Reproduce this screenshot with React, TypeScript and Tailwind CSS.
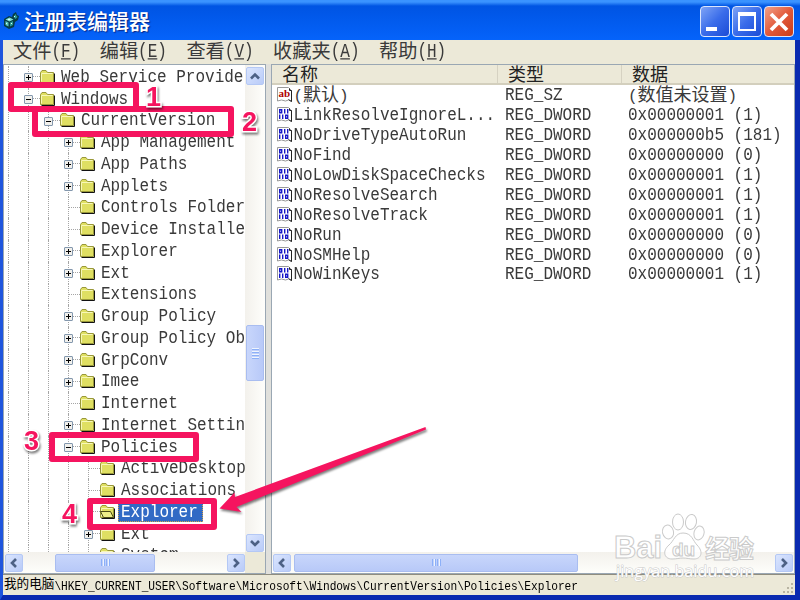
import clsx from 'clsx'

type TreeNode = {
  name: string
  level: number
  state?: 'open' | 'closed'
  selected?: boolean
}

type RegistryValue = {
  name: string
  type: string
  data: string
}

const menus = [
  { label: '文件', hotkey: 'F' },
  { label: '编辑', hotkey: 'E' },
  { label: '查看', hotkey: 'V' },
  { label: '收藏夹', hotkey: 'A' },
  { label: '帮助', hotkey: 'H' },
]

const nodes: TreeNode[] = [
  { name: 'Web Service Providers', level: 1, state: 'closed' },
  { name: 'Windows', level: 1, state: 'open' },
  { name: 'CurrentVersion', level: 2, state: 'open' },
  { name: 'App Management', level: 3, state: 'closed' },
  { name: 'App Paths', level: 3, state: 'closed' },
  { name: 'Applets', level: 3, state: 'closed' },
  { name: 'Controls Folder', level: 3 },
  { name: 'Device Installer', level: 3 },
  { name: 'Explorer', level: 3, state: 'closed' },
  { name: 'Ext', level: 3, state: 'closed' },
  { name: 'Extensions', level: 3 },
  { name: 'Group Policy', level: 3, state: 'closed' },
  { name: 'Group Policy Objects', level: 3, state: 'closed' },
  { name: 'GrpConv', level: 3, state: 'closed' },
  { name: 'Imee', level: 3, state: 'closed' },
  { name: 'Internet', level: 3 },
  { name: 'Internet Settings', level: 3, state: 'closed' },
  { name: 'Policies', level: 3, state: 'open' },
  { name: 'ActiveDesktop', level: 4 },
  { name: 'Associations', level: 4 },
  { name: 'Explorer', level: 4, selected: true },
  { name: 'Ext', level: 4, state: 'closed' },
  { name: 'System', level: 4 },
]

const values: RegistryValue[] = [
  { name: '(默认)', type: 'REG_SZ', data: '(数值未设置)' },
  { name: 'LinkResolveIgnoreL...', type: 'REG_DWORD', data: '0x00000001 (1)' },
  { name: 'NoDriveTypeAutoRun', type: 'REG_DWORD', data: '0x000000b5 (181)' },
  { name: 'NoFind', type: 'REG_DWORD', data: '0x00000000 (0)' },
  { name: 'NoLowDiskSpaceChecks', type: 'REG_DWORD', data: '0x00000001 (1)' },
  { name: 'NoResolveSearch', type: 'REG_DWORD', data: '0x00000001 (1)' },
  { name: 'NoResolveTrack', type: 'REG_DWORD', data: '0x00000001 (1)' },
  { name: 'NoRun', type: 'REG_DWORD', data: '0x00000000 (0)' },
  { name: 'NoSMHelp', type: 'REG_DWORD', data: '0x00000000 (0)' },
  { name: 'NoWinKeys', type: 'REG_DWORD', data: '0x00000001 (1)' },
]

function AppIcon() {
  return (
    <svg width="16" height="18" viewBox="0 0 16 18">
      <path d="M0 8l5-3 3 1 1-3 3-2 1 3 2 1-1 4-3 2-1 5-5 2-5-3z" fill="#063c46" />
      <path d="M1.5 8.5l4-2 4 2-4 2z" fill="#7fe0d8" />
      <path d="M1.5 10l3 1.5v4l-3-1.5z" fill="#5cc9bd" />
      <path d="M6 11.5l3-1.5v4l-3 1.5z" fill="#2a9a94" />
      <path d="M9.5 6l2-3 1 2 1 1-2 2z" fill="#2f9c94" />
      <path d="M4 8h2v1H4zM2 12h1v1H2zM7 12h1v1H7zM10 5h1v1h-1z" fill="#d8fffa" />
    </svg>
  )
}

function TitleBar() {
  const button =
    'flex h-[31px] w-[30px] items-center justify-center rounded-[4px] border border-[#dbe6fd]'

  return (
    <div className="flex h-10 shrink-0 items-center bg-linear-to-b from-[#3a93ff] from-5% via-[#0054e3] via-15% to-[#0563fb] pr-[6px] pl-1">
      <AppIcon />
      <h1 className="ml-[4px] flex-1 font-['Noto_Sans_CJK_SC',sans-serif] text-[21px] leading-10 font-medium text-white [text-shadow:1px_1px_1px_#0a2a8a]">
        注册表编辑器
      </h1>
      <div className="flex gap-[2px] pt-[3px]">
        <div className={clsx(button, 'bg-linear-to-br from-[#7fa3f5] via-[#3a6cea] to-[#1c4bd6]')}>
          <div className="mt-[15px] mr-[7px] h-[4px] w-[11px] bg-white" />
        </div>
        <div className={clsx(button, 'bg-linear-to-br from-[#7fa3f5] via-[#3a6cea] to-[#1c4bd6]')}>
          <div className="h-[19px] w-[18px] border-2 border-t-4 border-white" />
        </div>
        <div className={clsx(button, 'bg-linear-to-br from-[#f0a088] via-[#e2593a] to-[#c93c17]')}>
          <svg width="20" height="20" viewBox="0 0 20 20">
            <path d="M2 2l16 16M18 2L2 18" stroke="#fff" strokeWidth="3.8" />
          </svg>
        </div>
      </div>
    </div>
  )
}

function MenuBar() {
  return (
    <div className="flex h-[24px] shrink-0 gap-[19.5px] bg-[#ece9d8] pl-[10px] text-[19.2px] leading-[26px] text-[#3a3a3a]">
      {menus.map((menu) => (
        <span key={menu.hotkey} className="flex whitespace-nowrap">
          {menu.label}
          <span className="scale-y-125 text-[16px] leading-[24px]">
            (<u className="decoration-1 underline-offset-1">{menu.hotkey}</u>)
          </span>
        </span>
      ))}
    </div>
  )
}

function Folder({ open }: { open?: boolean }) {
  return (
    <svg width="16" height="14" viewBox="0 0 16 14" className="shrink-0">
      <path d="M1.5 13.5h13v-10" fill="none" stroke="#111" />
      <path d="M.5 12.5V2.5l1.5-2h4l1.5 2h6v10z" fill="#dfdf62" stroke="#99983a" />
      <path d="M1.5 11.5v-8h11" fill="none" stroke="#f7f7b8" />
      {open && (
        <path d="M3.5 12.5l-3-6h10l3 6z" fill="#eded87" stroke="#4b4a17" />
      )}
    </svg>
  )
}

function TreeRow({ node }: { node: TreeNode }) {
  return (
    <li className="flex h-[21.75px] items-center">
      {Array.from({ length: node.level }, (_, i) => (
        <span key={i} className="h-full w-5 shrink-0 pl-[5px]">
          <span className="block h-full border-l border-dotted border-[#a5a5a5]" />
        </span>
      ))}
      <span className="relative flex h-full w-[17px] shrink-0 items-center pl-[5px]">
        <span className="h-full w-0 border-l border-dotted border-[#a5a5a5]" />
        <span className="flex-1 border-t border-dotted border-[#a5a5a5]" />
        {node.state && (
          <svg width="9" height="9" viewBox="0 0 9 9" className="absolute top-[7px] left-[1px]">
            <rect x=".5" y=".5" width="8" height="8" rx=".5" fill="#f1f0ec" stroke="#8397ad" />
            <path d={node.state === 'closed' ? 'M2 4.5h5M4.5 2v5' : 'M2 4.5h5'} stroke="#000" />
          </svg>
        )}
      </span>
      <Folder open={node.selected} />
      <span
        className={clsx(
          'ml-[2px] h-[20px] pr-[5px] pl-[3px] leading-[20px] whitespace-nowrap',
          node.selected && 'bg-[#316ac5] text-white outline-1 -outline-offset-1 outline-dotted outline-[#d8a24a]',
        )}
      >
        <span className="inline-block scale-y-115">{node.name}</span>
      </span>
    </li>
  )
}

const chevrons = {
  up: 'M4 10.5l4-4 4 4',
  down: 'M4 6l4 4 4-4',
  left: 'M10 4L6 8l4 4',
  right: 'M6 4l4 4-4 4',
}

function ScrollButton({ direction }: { direction: keyof typeof chevrons }) {
  return (
    <div className="flex size-[18px] shrink-0 items-center justify-center rounded-[2px] border border-[#b4c8f5] bg-linear-to-br from-[#dae5fe] to-[#b9cbf8]">
      <svg width="16" height="16" viewBox="0 0 16 16">
        <path d={chevrons[direction]} fill="none" stroke="#4d6185" strokeWidth="2.6" />
      </svg>
    </div>
  )
}

function Grip({ vertical }: { vertical?: boolean }) {
  return (
    <div className={clsx('flex gap-px', vertical && 'flex-col')}>
      {[0, 1, 2, 3].map((i) => (
        <div
          key={i}
          className={
            vertical
              ? 'h-[2px] w-[7px] border-b border-[#8cb0f8] bg-[#eef4fe]'
              : 'h-[7px] w-[1.5px] border-r border-[#8cb0f8] bg-[#eef4fe]'
          }
        />
      ))}
    </div>
  )
}

function TreePane() {
  return (
    <div className="flex w-[263px] shrink-0 flex-col border border-[#9aa7b3] bg-white">
      <div className="flex h-[487px]">
        <ul className="-ml-px w-[242px] overflow-hidden pt-px text-[16px] text-[#3a3a3a]">
          {nodes.map((node, i) => (
            <TreeRow key={i} node={node} />
          ))}
        </ul>
        <div className="flex w-[20px] flex-col items-center bg-linear-to-r from-[#f3f1ec] to-[#fefefb] pt-[2px]">
          <ScrollButton direction="up" />
          <div className="mt-[240px] flex h-[56px] w-[18px] items-center justify-center rounded-[2px] border border-[#a9bdf0] bg-linear-to-r from-[#c8d6fb] to-[#b8c9f8]">
            <Grip vertical />
          </div>
          <div className="flex-1" />
          <ScrollButton direction="down" />
        </div>
      </div>
      <div className="flex flex-1 bg-[#ece9d8]">
        <div className="flex w-[241px] items-center bg-linear-to-b from-[#f3f1ec] to-[#fefefb] pl-px">
          <ScrollButton direction="left" />
          <div className="ml-[32px] flex h-[18px] w-[100px] items-center justify-center rounded-[2px] border border-[#a9bdf0] bg-linear-to-b from-[#c8d6fb] to-[#b8c9f8]">
            <Grip />
          </div>
          <div className="flex-1" />
          <ScrollButton direction="right" />
        </div>
      </div>
    </div>
  )
}

function ValueIcon({ text }: { text?: boolean }) {
  return (
    <svg width="16" height="16" viewBox="0 0 16 16" className="shrink-0">
      <path d="M.5 .5h11l3 3v11l-3-1.5-3 1-4-1-4 1z" fill="#fff" stroke="#9a9a9a" />
      <path d="M12.5 1.5v2h2v11l-3-2" fill="none" stroke="#222" />
      {text ? (
        <text x="1.5" y="10" className="fill-[#b00000] font-['Liberation_Serif',serif] text-[11px] font-bold">
          ab
        </text>
      ) : (
        <g fill="none" stroke="#1717c8" strokeWidth="1.4">
          <path d="M2.7 2.7h2v3h-2zM7.7 2v4.4M10.7 2v4.4" />
          <path d="M2.7 7.6V12M5.7 7.6V12M8.7 8.3h2v3h-2z" />
        </g>
      )}
    </svg>
  )
}

// full-width characters are drawn at twice the advance of the latin ones
function Mixed({ text }: { text: string }) {
  return text.split(/([\u4e00-\u9fff]+)/).map((part, i) =>
    i % 2 ? (
      <span key={i} className="text-[18px]">
        {part}
      </span>
    ) : (
      part
    ),
  )
}

function ValuesPane() {
  return (
    <div className="flex min-w-0 flex-1 flex-col border border-[#9aa7b3] bg-white">
      <div className="flex h-[20px] border-b-2 border-[#d3cfbd] bg-[#ece9d8] text-[18px] leading-[22px] text-[#222]">
        <span className="w-[226px] border-r border-[#d6d2c2] pl-[10px]">名称</span>
        <span className="w-[124px] border-r border-[#d6d2c2] pl-[10px]">类型</span>
        <span className="pl-[10px]">数据</span>
      </div>
      <div className="h-[467px] pt-[0.5px] text-[16px] text-[#3a3a3a]">
        {values.map((value) => {
          const textStyle = value.type === 'REG_SZ' ? 'pt-[3px]' : 'scale-y-115'

          return (
            <div key={value.name} className="flex h-[19.9px] items-center whitespace-nowrap">
              <div className="flex w-[233px] items-center pl-[5px]">
                <ValueIcon text={value.type === 'REG_SZ'} />
                <span className={clsx('ml-[0.5px] leading-[18px]', textStyle)}>
                  <Mixed text={value.name} />
                </span>
              </div>
              <span className="w-[123px] scale-y-115 leading-[18px]">{value.type}</span>
              <span className={clsx('leading-[18px]', textStyle)}>
                <Mixed text={value.data} />
              </span>
            </div>
          )
        })}
      </div>
      <div className="flex flex-1 items-center bg-linear-to-b from-[#f3f1ec] to-[#fefefb] px-px">
        <ScrollButton direction="left" />
        <div className="ml-[3px] flex h-[18px] w-[284px] items-center justify-center rounded-[2px] border border-[#a9bdf0] bg-linear-to-b from-[#c8d6fb] to-[#b8c9f8]">
          <Grip />
        </div>
        <div className="flex-1" />
        <ScrollButton direction="right" />
      </div>
    </div>
  )
}

function StatusBar() {
  return (
    <div className="flex h-[21px] shrink-0 items-center border-t border-[#8f8d80] bg-[#ece9d8] pl-px whitespace-nowrap text-black">
      <span className="mt-px text-[12.6px]">我的电脑</span>
      <span className="mt-px flex-1 scale-y-120 text-[11.2px] leading-4">
        \HKEY_CURRENT_USER\Software\Microsoft\Windows\CurrentVersion\Policies\Explorer
      </span>
      <svg width="12" height="12" viewBox="0 0 12 12" className="mt-[6px]">
        <path d="M8 1h2v2H8zM4 5h2v2H4zM8 5h2v2H8zM0 9h2v2H0zM4 9h2v2H4zM8 9h2v2H8z" fill="#b8b4a2" />
      </svg>
    </div>
  )
}

function Watermark() {
  return (
    <svg
      width="160"
      height="75"
      viewBox="0 0 160 75"
      className="absolute top-[510px] left-[608px] fill-white/80 stroke-[#cacaca]"
      strokeWidth="1"
    >
      <ellipse cx="60" cy="22" rx="5.5" ry="7" transform="rotate(-12 60 22)" />
      <ellipse cx="70" cy="12" rx="5.5" ry="8" />
      <ellipse cx="83" cy="12" rx="5.5" ry="7.5" transform="rotate(10 83 12)" />
      <ellipse cx="91" cy="23" rx="5" ry="7" transform="rotate(15 91 23)" />
      <path d="M75 23c9 0 10 8 14 12 7 7 4 14-3 14-5 0-7-1-11-1s-6 1-11 1c-8 0-10-8-3-14 5-4 6-12 14-12z" />
      <g className="font-['Liberation_Sans',sans-serif] font-bold">
        <text x="6" y="48" textLength="48" lengthAdjust="spacingAndGlyphs" className="text-[31px]">
          Bai
        </text>
        <text x="64" y="46" className="text-[19px]">
          du
        </text>
        <text x="97" y="48" textLength="49" className="font-['Noto_Sans_CJK_SC',sans-serif] text-[25px]">
          经验
        </text>
      </g>
      <text
        x="8"
        y="67"
        textLength="138"
        className="fill-white font-['Open_Sans',sans-serif] text-[16px] [paint-order:stroke]"
      >
        jingyan.baidu.com
      </text>
    </svg>
  )
}

const steps = [
  { label: '1', x: 146, y: 106, box: 'top-[82px] left-[8px] h-[30px] w-[131px]' },
  { label: '2', x: 242, y: 131, box: 'top-[106px] left-[32px] h-[31px] w-[202px]' },
  { label: '3', x: 24, y: 450, box: 'top-[432px] left-[49px] h-[30px] w-[150px]' },
  { label: '4', x: 62, y: 523, box: 'top-[498px] left-[87px] h-[32px] w-[130px]' },
]

function Annotations() {
  return (
    <>
      {steps.map((step) => (
        <div
          key={step.label}
          className={clsx('absolute rounded-[3px] border-6 border-[#f5145f]', step.box)}
        />
      ))}
      <svg
        width="800"
        height="600"
        viewBox="0 0 800 600"
        className="absolute top-0 left-0 fill-[#f5145f] drop-shadow-[1px_2px_1px_rgba(0,0,0,0.5)]"
      >
        <path d="M219.5 508.5L234.5 492.5L235 497L425.5 427L426 429.5L236.5 507L241.5 512Z" />
        {steps.map((step) => (
          <text
            key={step.label}
            x={step.x}
            y={step.y}
            className="stroke-white stroke-3 font-['Liberation_Sans',sans-serif] text-[27px] font-bold [paint-order:stroke]"
          >
            {step.label}
          </text>
        ))}
      </svg>
    </>
  )
}

export default function App() {
  return (
    <div className="relative flex h-[600px] w-[800px] flex-col overflow-hidden bg-[#0a2fb5] font-['Liberation_Mono','Noto_Sans_CJK_SC',monospace]">
      <TitleBar />
      <div className="flex min-h-0 flex-1 flex-col border-x-[3px] border-r-[5px] border-b-[5px] border-l-[#1f55dd] border-r-[#0a2ab0] border-b-[#0a2ab0]">
        <MenuBar />
        <div className="flex min-h-0 flex-1 bg-[#ece9d8]">
          <TreePane />
          <div className="w-[5px] shrink-0 bg-[#e0e0dc]" />
          <ValuesPane />
        </div>
        <StatusBar />
      </div>
      <Watermark />
      <Annotations />
    </div>
  )
}
